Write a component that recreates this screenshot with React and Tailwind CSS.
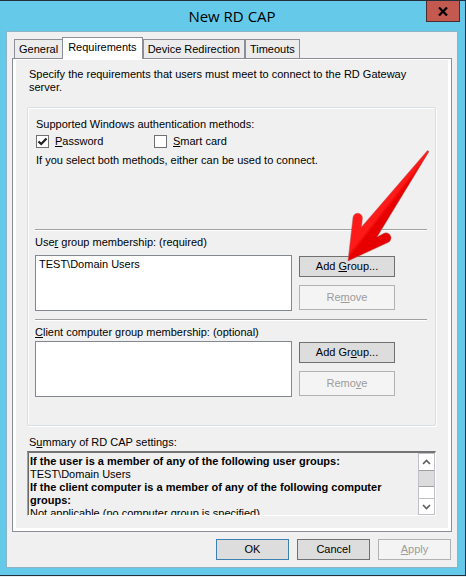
import { useState } from "react";
import clsx from "clsx";

const TABS = [
  { id: "general", label: "General" },
  { id: "requirements", label: "Requirements" },
  { id: "device", label: "Device Redirection" },
  { id: "timeouts", label: "Timeouts" },
];

function PushButton({ children, className, isDefault, disabled }) {
  return (
    <button
      type="button"
      disabled={disabled}
      className={clsx(
        "flex items-center justify-center border",
        disabled && "border-[#b0b2b4] bg-[#f4f4f4] text-[#9b9c9b]",
        !disabled && "bg-[#dddddd]",
        !disabled && (isDefault ? "border-[#3c7fb1]" : "border-[#707070]"),
        className
      )}
    >
      <span>{children}</span>
    </button>
  );
}

function CheckBox({ id, checked, onChange, children }) {
  return (
    <div className="flex items-center">
      <span className="grid size-[13px]">
        <input
          id={id}
          type="checkbox"
          checked={checked}
          onChange={onChange}
          className="col-start-1 row-start-1 size-[13px] appearance-none border border-[#707070] bg-white"
        />
        {checked && (
          <svg viewBox="0 0 13 13" className="pointer-events-none col-start-1 row-start-1 size-[13px]">
            <path d="M2.500 6.500L5.200 9L10.500 3.500" fill="none" stroke="#212121" strokeWidth="2.300" />
          </svg>
        )}
      </span>
      <label htmlFor={id} className="pl-[6px]">
        {children}
      </label>
    </div>
  );
}

function Separator() {
  return <div className="h-[2px] border-t border-b border-t-[#a0a0a0] border-b-white" />;
}

function GroupPicker({ id, label, items, addLabel, removeLabel, className }) {
  return (
    <div className={clsx("flex flex-col pt-[2px]", className)}>
      <label htmlFor={id} className="leading-[18px]">
        {label}
      </label>
      <div className="flex items-start gap-[7px] pr-8">
        <select
          id={id}
          size={4}
          className="h-14 min-w-0 flex-1 appearance-none overflow-hidden border border-[#828790] bg-white px-[3px] py-[2px]"
        >
          {items.map((item) => (
            <option key={item} className="h-[13px] min-h-0 p-0">
              {item}
            </option>
          ))}
        </select>
        <div className="flex w-24 flex-col gap-2 pt-[1px]">
          <PushButton className="h-[21px]">{addLabel}</PushButton>
          <PushButton className="h-[25px]" disabled>
            {removeLabel}
          </PushButton>
        </div>
      </div>
    </div>
  );
}

function Summary() {
  return (
    <div className="flex h-[65px] border border-t-2 border-t-[#747474] border-r-white border-b-white border-l-[#a0a0a0]">
      <div
        id="summary"
        className="min-w-0 flex-1 overflow-hidden border-l border-[#696969] pt-[2px] pl-[1px] leading-[13px]"
      >
        <p className="font-bold">If the user is a member of any of the following user groups:</p>
        <p>TEST\Domain Users</p>
        <p className="font-bold">If the client computer is a member of any of the following computer groups:</p>
        <p>Not applicable (no computer group is specified)</p>
      </div>
      <div className="flex w-[17px] flex-col border border-[#c0c0c8] bg-white">
        <button type="button" aria-label="Scroll up" className="flex h-4 items-center justify-center">
          <svg viewBox="0 0 9 6" className="h-[6px] w-[9px]">
            <path d="M1 5L4.500 1.500L8 5" fill="none" stroke="#606060" strokeWidth="1.700" />
          </svg>
        </button>
        <div className="h-[17px] border-y border-[#a0a0a0] bg-[#dcdcdc]" />
        <div className="flex-1" />
        <button
          type="button"
          aria-label="Scroll down"
          className="flex h-4 items-center justify-center border-t border-[#c0c0c8]"
        >
          <svg viewBox="0 0 9 6" className="h-[6px] w-[9px]">
            <path d="M1 1L4.500 4.500L8 1" fill="none" stroke="#606060" strokeWidth="1.700" />
          </svg>
        </button>
      </div>
    </div>
  );
}

// Red callout pointing at the first "Add Group..." button
function Pointer() {
  return (
    <svg
      viewBox="0 0 84 114"
      className="pointer-events-none absolute right-[-4px] bottom-[14px] h-[114px] w-[84px]"
      aria-hidden="true"
    >
      <defs>
        <linearGradient id="shaft" gradientUnits="userSpaceOnUse" x1="19" y1="72" x2="33" y2="83">
          <stop offset="0.350" stopColor="#ff1a1a" />
          <stop offset="0.550" stopColor="#e60000" />
        </linearGradient>
      </defs>
      <path
        d="M80.500 1.500L82 2.500L30 88L37 84.300A5 5 0 0 1 41 93.500L1 112L6 68.500A4.700 4.700 0 0 1 15.400 69.500L14.500 78Z"
        fill="url(#shaft)"
        stroke="#b06060"
        strokeWidth="0.500"
        strokeLinejoin="round"
      />
    </svg>
  );
}

function App() {
  const [activeTab, setActiveTab] = useState("requirements");
  const [methods, setMethods] = useState({ password: true, smartCard: false });

  const toggle = (name) => setMethods((prev) => ({ ...prev, [name]: !prev[name] }));

  return (
    <div className="border-b border-[#e8eef2] font-['Liberation_Sans',Arial,sans-serif] text-[11px] leading-[13px] text-black">
      <div className="border-y border-r border-[#26303a] bg-[#65c9ea] pr-[7px] pb-[7px] pl-[6px]">
        <header className="grid h-[30px] grid-cols-[1fr_auto_1fr] items-start">
          <h1 className="col-start-2 pt-[5px] font-['Open_Sans',sans-serif] text-[15px] leading-5">New RD CAP</h1>
          <button
            type="button"
            aria-label="Close"
            className="-mr-0.5 flex h-[21px] w-[34px] items-center justify-center justify-self-end border border-t-0 border-[#4a2b30] bg-[#c4594f]"
          >
            <svg viewBox="0 0 10 9" className="h-[9px] w-[10px]">
              <path d="M1 0.500L9 8.500M9 0.500L1 8.500" stroke="#000" strokeWidth="2.200" />
            </svg>
          </button>
        </header>

        <main className="border border-[#8eb4c4] bg-[#f0f0f0] px-[5px] pt-[5px] pb-[7px]">
          <div role="tablist" className="flex items-end pl-[2px]">
            {TABS.map((tab) => {
              const active = tab.id === activeTab;
              return (
                <button
                  key={tab.id}
                  type="button"
                  role="tab"
                  aria-selected={active}
                  onClick={() => setActiveTab(tab.id)}
                  className={clsx(
                    "border border-b-0 border-[#8c8e98]",
                    active ? "z-10 mb-[-1px] -ml-px h-[22px] bg-white px-[5px] pb-[2px]" : "h-[19px] bg-[#ececec] px-1"
                  )}
                >
                  {tab.label}
                </button>
              );
            })}
          </div>

          <section className="border border-[#8c8e98] bg-white px-[3px] pt-[1px] pb-[3px]">
            <div className="bg-[#f0f0f0] pt-2 pr-3 pb-3 pl-[11px]">
              <p className="pl-[2px]">
                Specify the requirements that users must meet to connect to the RD Gateway server.
              </p>

              <div className="mt-[13px] rounded-xs border border-[#d5dfe5] pt-[10px] pr-2 pb-7 pl-[7px] shadow-[inset_1px_1px_0_#fff,1px_1px_0_#fff]">
                <fieldset className="pl-[1px]">
                  <legend>Supported Windows authentication methods:</legend>
                  <div className="mt-1 grid grid-cols-[118px_1fr]">
                    <CheckBox id="password" checked={methods.password} onChange={() => toggle("password")}>
                      <u>P</u>assword
                    </CheckBox>
                    <CheckBox id="smart-card" checked={methods.smartCard} onChange={() => toggle("smartCard")}>
                      <u>S</u>mart card
                    </CheckBox>
                  </div>
                  <p className="mt-[6px]">If you select both methods, either can be used to connect.</p>
                </fieldset>

                <div className="relative mt-[62px]">
                  <Separator />
                  <GroupPicker
                    id="user-groups"
                    className="gap-1 pb-2"
                    label={<>Use<u>r</u> group membership: (required)</>}
                    items={["TEST\\Domain Users"]}
                    addLabel={<>Add <u>G</u>roup...</>}
                    removeLabel={<>Re<u>m</u>ove</>}
                  />
                  <div className="absolute top-0 right-0 h-12 w-0">
                    <Pointer />
                  </div>
                </div>

                <Separator />
                <GroupPicker
                  id="computer-groups"
                  label={<><u>C</u>lient computer group membership: (optional)</>}
                  items={[]}
                  addLabel={<>Add Gr<u>o</u>up...</>}
                  removeLabel={<>Remo<u>v</u>e</>}
                />
              </div>

              <h2 className="mt-[10px] mb-[2px] pl-[2px]">
                S<u>u</u>mmary of RD CAP settings:
              </h2>
              <Summary />
            </div>
          </section>

          <footer className="mt-[7px] flex justify-end gap-2 pr-px">
            <PushButton className="h-[21px] w-[73px]" isDefault>
              OK
            </PushButton>
            <PushButton className="h-[21px] w-[73px]">Cancel</PushButton>
            <PushButton className="h-[21px] w-[73px]" disabled>
              <u>A</u>pply
            </PushButton>
          </footer>
        </main>
      </div>
    </div>
  );
}

export default App;
